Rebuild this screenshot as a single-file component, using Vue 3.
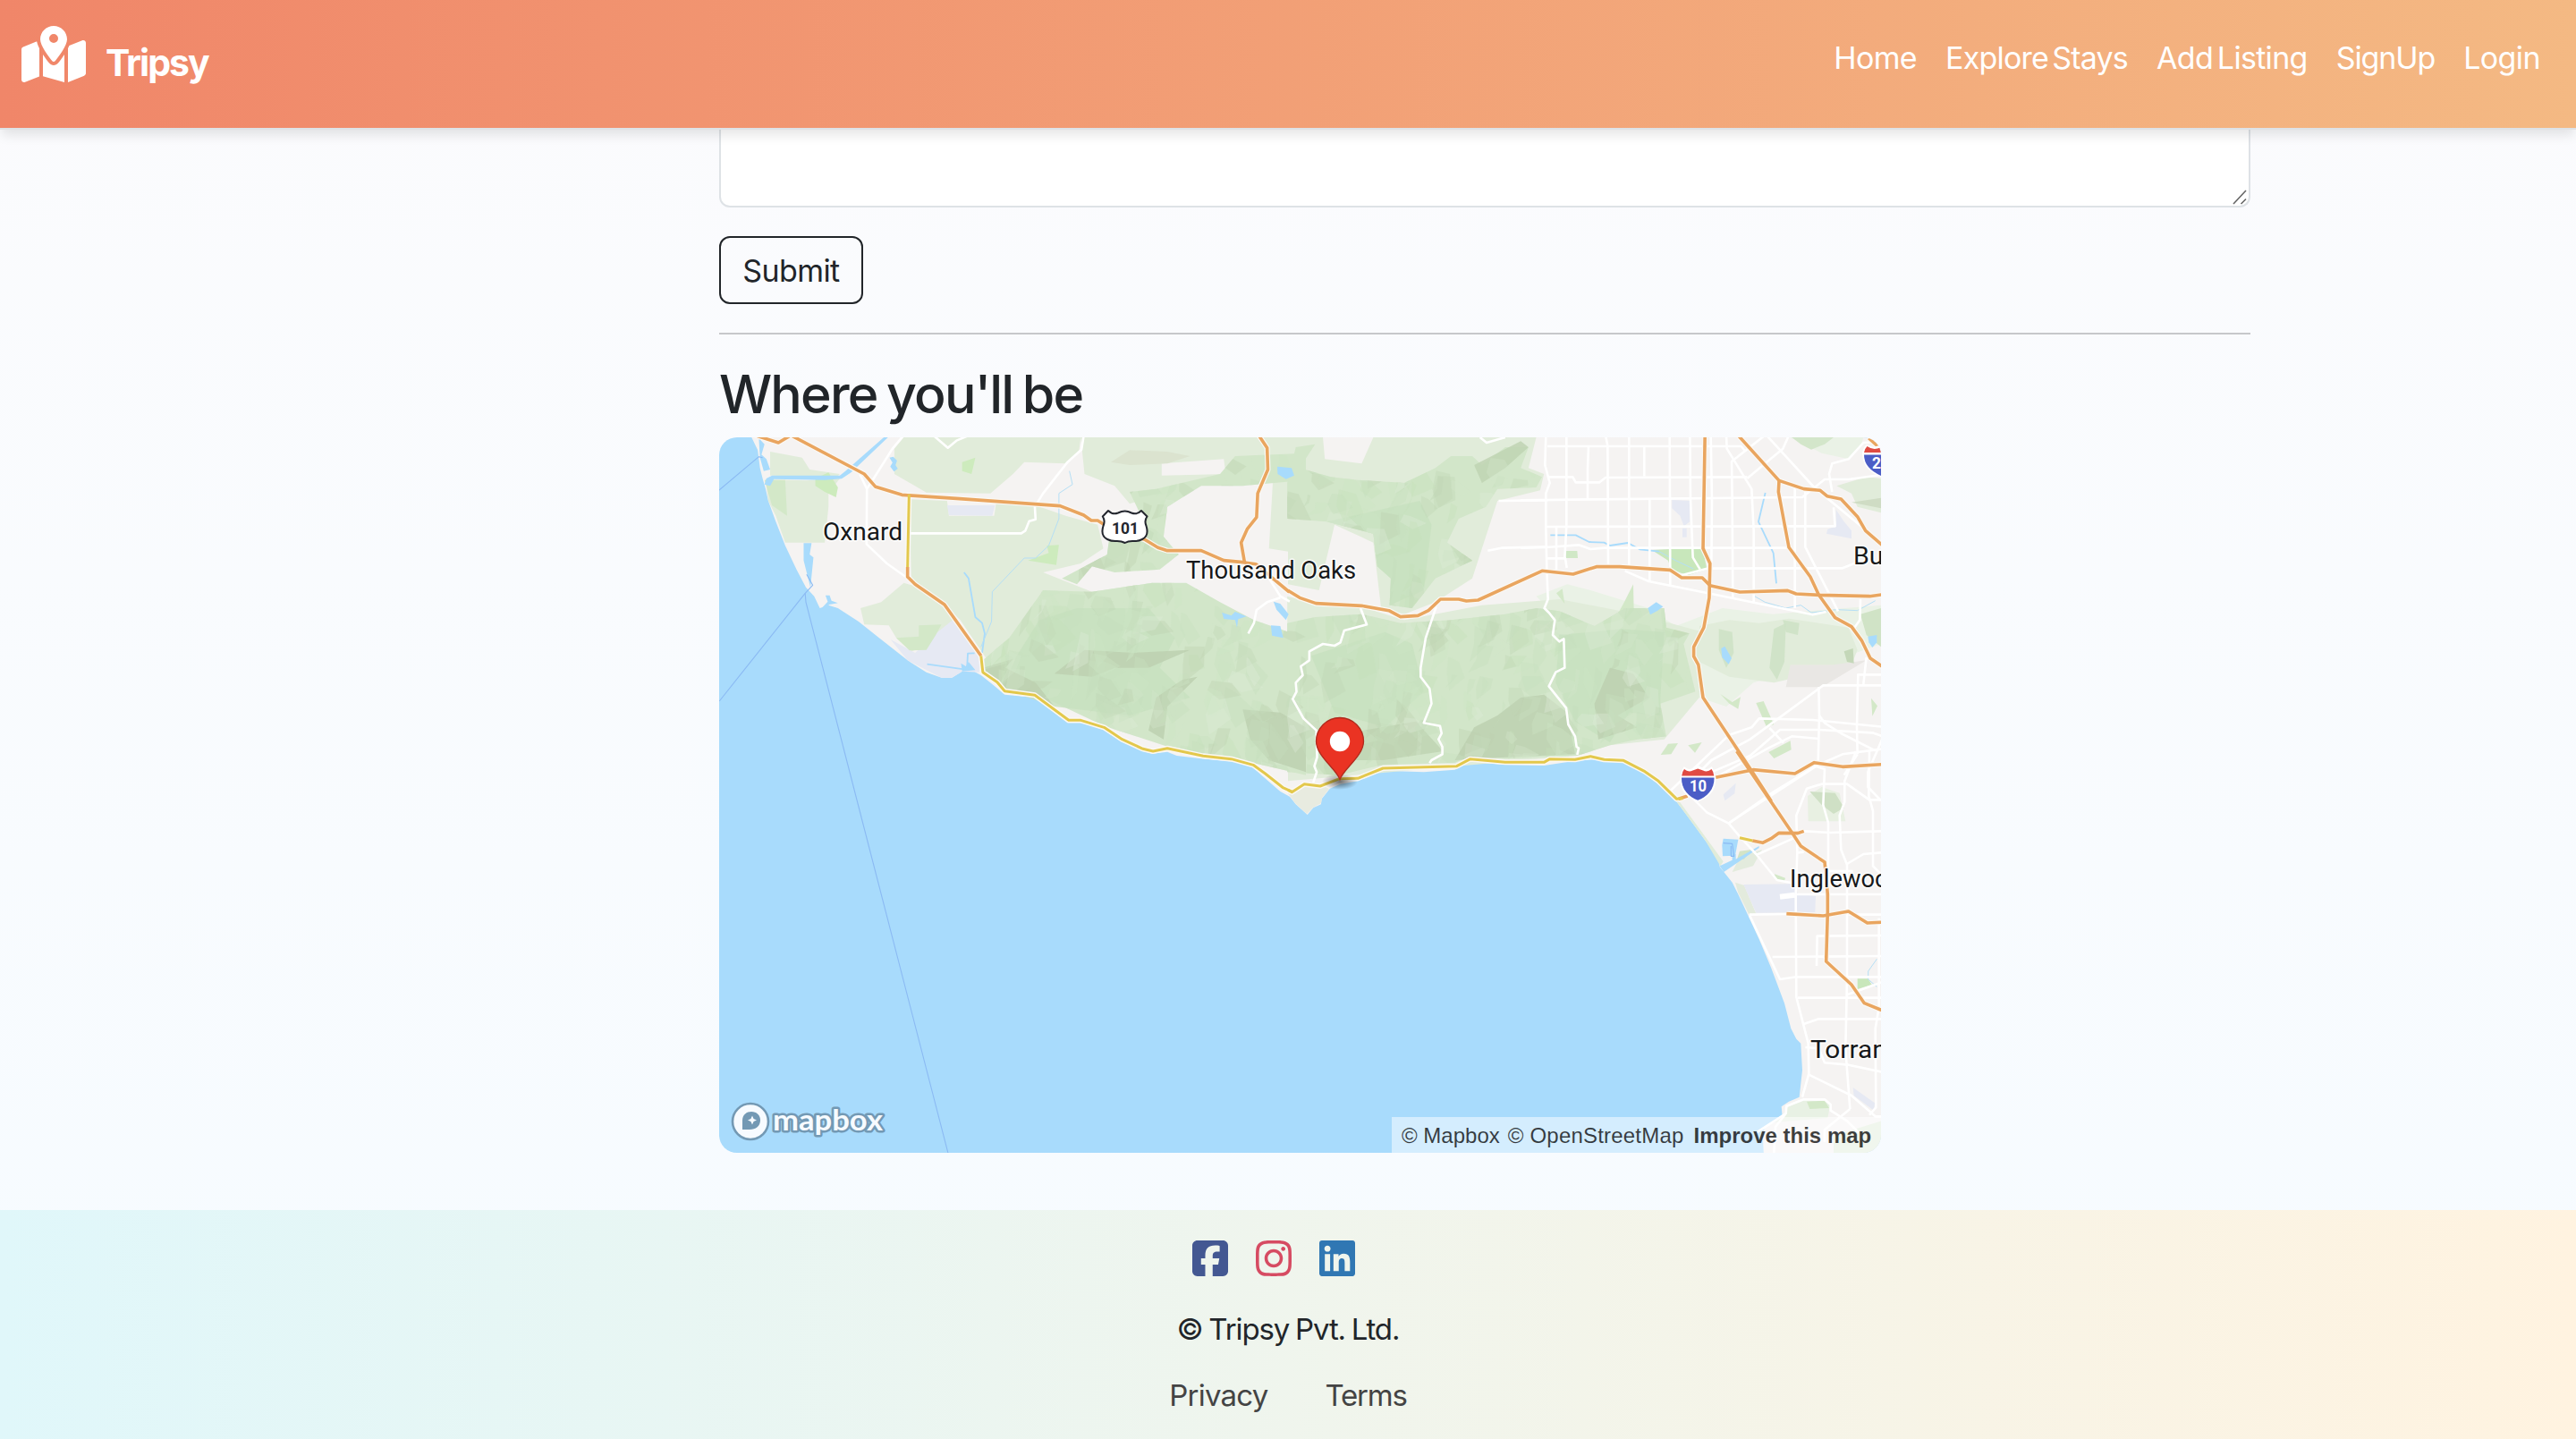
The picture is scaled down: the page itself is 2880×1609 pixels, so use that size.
<script setup>
const navLinks = [
  { label: 'Home', cls: 'home' },
  { label: 'Explore Stays', cls: 'explore' },
  { label: 'Add Listing', cls: 'add' },
  { label: 'SignUp', cls: 'signup' },
  { label: 'Login', cls: 'login' },
]

const socials = [
  {
    name: 'facebook',
    d: 'M64 32C28.7 32 0 60.7 0 96V416c0 35.3 28.7 64 64 64h98.2V334.2H109.4V256h52.8V222.3c0-87.1 39.4-127.5 125-127.5c16.2 0 44.2 3.2 55.7 6.4V172c-6-.6-16.5-1-29.6-1c-42 0-58.2 15.9-58.2 57.2V256h83.6l-14.4 78.2H255V480H384c35.3 0 64-28.7 64-64V96c0-35.3-28.7-64-64-64H64z',
  },
  {
    name: 'instagram',
    d: 'M224.1 141c-63.6 0-114.9 51.3-114.9 114.9s51.3 114.9 114.9 114.9S339 319.5 339 255.9 287.7 141 224.1 141zm0 189.6c-41.1 0-74.7-33.5-74.7-74.7s33.5-74.7 74.7-74.7 74.7 33.5 74.7 74.7-33.6 74.7-74.7 74.7zm146.4-194.3c0 14.9-12 26.8-26.8 26.8-14.9 0-26.8-12-26.8-26.8s12-26.8 26.8-26.8 26.8 12 26.8 26.8zm76.1 27.2c-1.7-35.9-9.9-67.7-36.2-93.9-26.2-26.2-58-34.4-93.9-36.2-37-2.1-147.9-2.1-184.9 0-35.8 1.7-67.6 9.9-93.9 36.1s-34.4 58-36.2 93.9c-2.1 37-2.1 147.9 0 184.9 1.7 35.9 9.9 67.7 36.2 93.9s58 34.4 93.9 36.2c37 2.1 147.9 2.1 184.9 0 35.9-1.7 67.7-9.9 93.9-36.2 26.2-26.2 34.4-58 36.2-93.9 2.1-37 2.1-147.8 0-184.8zM398.8 388c-7.8 19.6-22.9 34.7-42.6 42.6-29.5 11.7-99.5 9-132.1 9s-102.7 2.6-132.1-9c-19.6-7.8-34.7-22.9-42.6-42.6-11.7-29.5-9-99.5-9-132.1s-2.6-102.7 9-132.1c7.8-19.6 22.9-34.7 42.6-42.6 29.5-11.7 99.5-9 132.1-9s102.7-2.6 132.1 9c19.6 7.8 34.7 22.9 42.6 42.6 11.7 29.5 9 99.5 9 132.1s2.7 102.7-9 132.1z',
  },
  {
    name: 'linkedin',
    d: 'M416 32H31.9C14.3 32 0 46.5 0 64.3v383.4C0 465.5 14.3 480 31.9 480H416c17.6 0 32-14.5 32-32.3V64.3c0-17.8-14.4-32.3-32-32.3zM135.4 416H69V202.2h66.5V416zm-33.2-243c-21.3 0-38.5-17.3-38.5-38.5S80.9 96 102.2 96c21.2 0 38.5 17.3 38.5 38.5 0 21.3-17.2 38.5-38.5 38.5zm282.1 243h-66.4V312c0-24.8-.5-56.7-34.5-56.7-34.6 0-39.9 27-39.9 54.9V416h-66.4V202.2h63.7v29.2h.9c8.9-16.8 30.6-34.5 62.9-34.5 67.2 0 79.7 44.3 79.7 101.9V416z',
  },
]

// Map tiles: each has its own local grid placed onto the map canvas.
const WEST = 'translate(800 480) scale(.42092 .33333)'
const MID = 'translate(1440 480) scale(.43367 .33333)'
const EAST = 'translate(1700 480) scale(.33333)'
const SOUTH = 'translate(1750 840) scale(.33333)'

const land = [
  [WEST, '93,20 112,70 118,130 125,165 133,200 140,240 160,310 185,390 215,470 240,530 262,560 277,600 300,590 325,600 380,645 430,695 470,735 510,775 560,815 600,833 628,833 655,812 680,808 705,825 740,860 768,890 848,900 935,985 975,985 1030,1008 1075,1045 1130,1078 1160,1088 1200,1082 1225,1095 1290,1105 1380,1115 1425,1132 1450,1160 1500,1215 1525,1232 1525,20'],
  [MID, '-2,20 -2,1222 20,1258 50,1293 65,1270 85,1258 87,1240 108,1205 135,1190 180,1180 245,1145 350,1150 430,1142 470,1115 560,1125 660,1128 740,1112 790,1108 865,1118 920,1155 955,1190 1000,1245 1045,1320 1600,1320 1600,20'],
  [SOUTH, '370,165 400,205 430,245 470,300 515,360 518,388 532,405 560,440 580,480 612,548 650,630 690,725 735,845 757,930 775,965 790,980 795,1070 785,1160 750,1175 725,1192 728,1225 700,1245 668,1260 663,1300 668,1400 1100,1400 1100,165'],
]

const areas = [
  [WEST, '#e1ecda', '133,168 240,172 330,165 300,215 300,260 290,380 185,380 160,290 140,240'],
  [WEST, '#e1ecda', '145,75 230,95 250,135 330,150 320,162 145,155'],
  [WEST, '#e1ecda', '475,65 500,27 970,27 965,75 930,115 820,110 790,150 730,215 560,212 475,150'],
  [WEST, '#e1ecda', '515,235 615,240 620,290 740,290 745,250 850,255 930,290 1015,320 1030,400 970,450 870,480 1000,545 1160,515 1250,560 1060,640 870,700 720,770 650,640 600,580 520,505'],
  [WEST, '#e1ecda', '970,27 1568,27 1568,420 1470,400 1480,180 1340,180 1230,200 1100,250 1060,190 980,150'],
  [WEST, '#e1ecda', '385,600 440,580 500,515 540,530 605,590 640,640 590,720 520,745 480,700 460,658 395,655'],
  [WEST, '#f5f3f2', '1185,115 1350,100 1355,150 1185,155'],
  [WEST, '#dbe3cf', '1050,110 1100,70 1200,75 1260,90 1200,115 1100,120'],
  [WEST, '#e6e9f3', '615,255 742,255 735,290 620,288'],
  [WEST, '#e6e9f3', '465,705 530,750 590,680 630,640 705,760 700,815 655,812 628,833 600,833 510,775'],
  [WEST, '#d3e8c8', '480,700 540,695 540,658 600,655 585,690 560,740 515,742'],
  [WEST, '#cdebbd', '830,440 885,415 880,390 912,388 905,455'],
  [WEST, '#d3e8c8', '130,170 185,170 190,290 150,255'],
  [WEST, '#cdebbd', '265,165 300,145 325,195 320,228 290,210 265,190'],
  [WEST, '#cdebbd', '655,110 690,95 680,150 655,140'],
  [MID, '#e1ecda', '0,27 90,27 95,100 190,115 220,27 640,27 620,130 660,150 650,205 540,240 510,360 475,500 380,580 300,620 240,600 220,380 120,320 80,540 0,520'],
  [MID, '#eaf2e6', '640,560 720,520 780,540 930,600 1000,660 1120,600 1250,620 1529,590 1529,720 1400,780 1200,850 1130,930 1060,900 960,1030 900,900'],
  [MID, '#e1ecda', '-2,560 90,590 200,600 300,640 500,590 700,570 900,620 1070,680 1060,900 970,1040 830,1060 740,1095 0,1180'],
  [EAST, '#e1ecda', '600,660 700,640 800,650 900,635 1100,665 1130,740 1110,790 850,850 700,830 600,780'],
  [EAST, '#e9e7e4', '905,790 1050,790 1160,775 1010,865 890,865'],
  [EAST, '#c8e7bb', '440,405 500,402 612,402 625,470 560,490 505,470 495,440'],
  [EAST, '#d0e8c6', '150,408 190,408 192,432 152,432'],
  [EAST, '#e6e9f3', '508,237 567,240 568,310 548,325 535,290 508,265'],
  [EAST, '#e6e9f3', '543,332 557,332 557,362 543,362'],
  [EAST, '#e6e9f3', '1058,270 1085,310 1110,340 1110,367 1026,350 1030,335 1058,325'],
  [EAST, '#e6e9f3', '680,1225 722,1187 718,1222 685,1246'],
  [EAST, '#eaf2e6', '905,27 1150,27 1140,60 1100,100 1010,80'],
  [EAST, '#d3e6ca', '910,27 1050,27 1020,50 975,68 940,50'],
  [EAST, '#e1ecda', '1060,190 1160,160 1209,165 1209,280 1130,260 1110,215'],
  [EAST, '#cfdcc4', '1110,245 1209,230 1209,265'],
  [EAST, '#d3e8c8', '790,918 815,912 850,990 825,998'],
  [EAST, '#d3e8c8', '470,1092 495,1055 528,1053 505,1090'],
  [EAST, '#d3e8c8', '562,1060 608,1050 585,1085'],
  [EAST, '#d3e8c8', '832,1083 905,1045 908,1075 850,1104'],
  [EAST, '#d3e8c8', '670,888 710,915 738,898 730,938 700,920'],
  [EAST, '#d3e8c8', '1176,902 1197,928 1180,962'],
  [EAST, '#d3e8c8', '120,550 140,535 148,585'],
  [EAST, '#d3e8c8', '345,585 378,520 380,610 330,612'],
  [SOUTH, '#e8f0e2', '813,150 860,120 920,140 940,235 815,235'],
  [SOUTH, '#cfe0c5', '820,135 905,140 935,190 900,210 860,180'],
  [SOUTH, '#e0ecda', '370,165 385,172 450,260 530,370 520,385 470,300 400,205'],
  [SOUTH, '#e3ebdd', '600,350 660,330 630,385 560,405 575,375'],
  [SOUTH, '#d3e4c6', '585,335 625,330 600,362 575,365'],
  [SOUTH, '#e3ebdd', '570,440 600,450 640,545 615,545 580,475'],
  [SOUTH, '#e6e9f3', '598,447 770,445 780,480 840,485 838,540 640,542'],
  [SOUTH, '#d3e8c8', '702,412 738,425 735,435 705,432'],
  [SOUTH, '#c8e7bb', '980,763 1015,763 1028,783 980,798'],
  [SOUTH, '#e6e9f3', '965,1128 1038,1180 1035,1205 968,1155'],
  [SOUTH, '#e8f1e4', '745,1195 800,1168 890,1180 880,1230 700,1245 730,1225'],
  [SOUTH, '#d3e8c8', '810,1175 870,1172 885,1197 820,1200'],
  [SOUTH, '#e0ecda', '900,1290 1060,1240 1060,1350 900,1350'],
]

const hills = [
  [WEST, '705,780 780,700 870,540 1000,545 1160,515 1250,515 1340,580 1430,640 1568,700 1568,1160 1430,1120 1295,1090 1200,1064 1032,995 848,885 768,870 715,815'],
  [WEST, '1100,210 1170,200 1340,150 1380,90 1568,80 1568,170 1400,190 1290,190 1200,260 1190,360 1230,420 1180,470 1060,480 1000,460 960,520 920,500 1040,420 1050,320 1130,290'],
  [MID, '-2,650 70,630 190,620 290,650 420,640 560,620 640,600 700,610 790,660 870,600 970,600 975,665 1035,685 1020,720 1035,800 1050,880 960,920 975,1030 900,1040 830,1060 745,1095 560,1105 470,1095 430,1118 245,1125 130,1160 -2,1150'],
  [MID, '20,60 70,50 30,130 110,160 180,170 300,180 380,130 420,90 475,90 500,120 560,60 620,60 600,130 655,160 640,195 540,200 510,260 440,300 410,380 475,440 380,500 320,600 262,590 265,500 230,460 220,350 100,310 -2,300 -2,180'],
]

const darker = [
  [WEST, '#c8e1bf', '860,640 960,600 1150,600 1220,700 1180,800 1260,900 1100,960 900,930 760,870 800,760'],
  [WEST, '#bdd0b0', '980,740 1110,750 1260,740 1150,800 1060,800 1000,830 900,820'],
  [WEST, '#bdd0b0', '1400,940 1500,950 1568,1000 1568,1150 1470,1110 1420,1040'],
  [WEST, '#bdd0b0', '1150,1010 1170,900 1240,840 1280,830 1200,930 1190,1040'],
  [WEST, '#bdd0b0', '710,800 790,770 770,800 850,850 900,930 840,885 768,870'],
  [MID, '#c8e1bf', '100,310 340,240 370,320 350,540 262,590 265,500 230,460 220,350'],
  [MID, '#c8e1bf', '700,690 860,670 970,680 960,900 960,960 880,950 830,1050 740,980 690,850'],
  [MID, '#c8e1bf', '60,760 250,680 320,720 350,880 250,1000 120,950'],
  [MID, '#bdd0b0', '540,960 600,900 660,890 720,950 740,1090 560,1100 430,1110 480,1000'],
  [MID, '#c0d3b3', '150,1020 330,980 400,1080 245,1110 150,1110'],
  [MID, '#bdd0b0', '830,800 890,820 930,900 850,960 900,1000 800,1040 790,920'],
  [MID, '#c0d3b3', '480,120 600,40 620,60 560,130 500,180'],
  [EAST, '#cde2c4', '665,670 710,680 715,750 690,800 665,740'],
  [EAST, '#cde2c4', '850,670 890,650 885,780 860,840 835,800'],
  [EAST, '#cde2c4', '880,640 935,650 930,690 890,680'],
  [EAST, '#bed3b2', '1085,745 1115,735 1118,785 1095,780'],
  [EAST, '#cbe0c0', '1140,620 1209,600 1209,730 1160,690'],
]

// Small shaded facets that give the mountains their relief.
function mulberry(seed) {
  let s = seed
  return () => {
    s = (s + 0x6d2b79f5) | 0
    let t = Math.imul(s ^ (s >>> 15), 1 | s)
    t = (t + Math.imul(t ^ (t >>> 7), 61 | t)) ^ t
    return ((t ^ (t >>> 14)) >>> 0) / 4294967296
  }
}
const rnd = mulberry(34)
const tones = ['#c8e1bf', '#c4e0b9', '#bdcfae', '#d3e6ca', '#dfebd8', '#c5dfbc', '#c0d6b4', '#cde5c4']
const facets = Array.from({ length: 700 }, () => {
  const x = 1080 + rnd() * 840
  const y = 500 + rnd() * 370
  const w = 6 + rnd() * 20
  const h = 12 + rnd() * 34
  const lean = (rnd() - 0.5) * 24
  const pts = [
    [x, y],
    [x + w * (0.4 + rnd() * 0.6), y + h * 0.2 * rnd()],
    [x + w + lean, y + h * (0.5 + rnd() * 0.3)],
    [x + lean, y + h],
    [x - w * 0.3 * rnd(), y + h * 0.5],
  ]
  return { p: pts.map((q) => q.map((n) => n.toFixed(1)).join(',')).join(' '), c: tones[Math.floor(rnd() * tones.length)] }
})

const water = [
  [WEST, '455,18 345,140 330,155 150,155 135,165 130,185 145,190 155,167 290,170 335,166 360,145 458,27'],
  [WEST, '462,95 472,92 482,105 478,120 484,132 474,142 464,125 470,112'],
  [WEST, '1492,125 1530,130 1537,155 1515,167 1493,150'],
  [WEST, '1345,615 1370,625 1380,612 1410,628 1388,637 1385,665 1380,640 1350,636'],
  [WEST, '1482,578 1500,585 1522,620 1515,640 1490,605'],
  [WEST, '1475,658 1500,660 1508,700 1478,692'],
  [WEST, '234,382 255,382 250,420 260,430 252,530 240,470 234,440'],
  [WEST, '292,557 303,557 308,575 325,583 302,588 290,602 282,600 298,578'],
  [WEST, '115,30 130,50 122,85 135,100 145,135 128,140 118,95'],
  [WEST, '652,785 665,795 672,780 690,808 655,812'],
  [EAST, '427,600 455,580 478,595 460,608 435,622'],
  [EAST, '673,735 685,728 708,768 698,788 676,765'],
  [EAST, '1165,695 1195,690 1195,715 1180,732 1168,715'],
  [SOUTH, '530,293 580,296 570,350 528,352 526,315'],
  [SOUTH, '518,385 560,365 560,345 572,345 572,362 650,318 650,324 532,405'],
]

const streams = [
  [WEST, '660,480 672,500 690,630 708,650 715,685 708,750'],
  [WEST, '562,788 660,805'],
  [WEST, '688,751 670,752 668,800'],
  [EAST, '100,355 185,355 230,378 280,380 300,390 360,381 400,403 465,410'],
  [EAST, '821,213 798,310 848,415 858,517'],
]
const thinStreams = [
  [WEST, '940,140 948,185 912,215 912,300 885,390 850,432 820,432 735,545 733,645 705,730'],
  [EAST, '465,410 520,440 580,468'],
  [EAST, '785,560 820,580 890,600 940,590 975,615 1060,605 1130,608 1190,575'],
  [SOUTH, '1045,697 1016,738 1016,765 1045,790'],
]
const ferries = [
  [WEST, '0,214 115,92 125,95'],
  [WEST, '10,912 238,550 258,523 242,487'],
  [WEST, '238,550 240,580 391,1320 618,2430'],
  [SOUTH, '530,308 560,310 566,352 556,352 556,318'],
]

const streets = [
  [WEST, '500,20 470,65 420,165 402,200 401,385 455,450 505,495'],
  [WEST, '383,150 402,200'],
  [WEST, '578,20 617,62 640,38 670,22'],
  [WEST, '978,20 972,68 935,110 870,215 848,260 850,302 833,308 823,340 812,349 518,349'],
  [WEST, '1470,500 1500,560 1525,578'],
  [WEST, '1500,565 1465,580 1437,606 1430,650 1415,685'],
  [MID, '187,600 203,655 145,675 135,715 120,726 90,720 55,745 55,775 33,795 38,825 20,850 22,880 12,905 40,970 73,1010 75,1100 68,1130 74,1150 65,1185'],
  [MID, '382,595 355,700 342,800 342,830 365,870 370,920 350,985 392,995 396,1020 388,1040 398,1065 398,1090 370,1110 365,1120'],
  [MID, '515,407 550,398 670,394'],
  [MID, '543,240 670,238'],
  [MID, '495,27 512,45 560,27'],
  [EAST, '85,20 82,120 98,180 85,215 85,330 88,470 92,570 80,600 95,615 115,640 108,690 130,712 145,703 148,800 118,815 95,862 153,935 160,990 183,1030 188,1065 195,1070 190,1092'],
  [EAST, '154,20 154,325'],
  [EAST, '120,330 120,470'],
  [EAST, '85,433 150,433 155,465'],
  [EAST, '154,325 148,433'],
  [EAST, '228,60 225,130 225,235'],
  [EAST, '285,20 292,55 294,460'],
  [EAST, '364,20 364,465'],
  [EAST, '415,60 415,158'],
  [EAST, '433,235 433,510'],
  [EAST, '500,20 502,525'],
  [EAST, '568,20 570,235 578,430 602,470'],
  [EAST, '638,20 642,240 640,465'],
  [EAST, '690,20 692,65 775,200 782,340 782,580'],
  [EAST, '820,20 708,108 710,240 712,565'],
  [EAST, '90,57 740,57 755,75'],
  [EAST, '90,160 175,160 185,178 265,178 285,162 760,160'],
  [EAST, '0,238 250,235 945,228 1020,168 1100,168 1215,152'],
  [EAST, '85,327 1055,325 1050,262'],
  [EAST, '0,398 85,396 195,388 235,402 280,398 905,398'],
  [EAST, '540,490 625,467 1080,466 1125,448'],
  [EAST, '350,475 430,510 640,552 900,605 980,622 1025,612'],
  [EAST, '825,20 985,195 1160,340'],
  [EAST, '1200,42 1150,45 1100,100 1045,115 1035,150 1045,210'],
  [EAST, '760,165 880,65 900,20'],
  [EAST, '920,195 920,600'],
  [EAST, '955,200 955,395 1065,610'],
  [EAST, '1140,570 1138,640 1120,665'],
  [EAST, '1160,765 1150,855'],
  [EAST, '1215,823 1132,823 1128,1000 1130,1090'],
  [EAST, '1215,859 1015,859 770,1040 640,1110 550,1200'],
  [EAST, '1000,865 1002,960 1020,985 1075,1020 1190,1078'],
  [EAST, '1002,960 998,1120'],
  [EAST, '500,1215 700,1025 775,1000 800,970 980,975 1215,998'],
  [EAST, '640,1150 770,1095 870,1008 1000,1008 1180,1018 1215,1030'],
  [EAST, '660,1165 830,1070 910,1030 1000,1038'],
  [EAST, '835,1002 882,1052'],
  [EAST, '700,1320 1000,1125 1080,1090 1215,1072'],
  [EAST, '1215,1035 1165,1150 1165,1200 1209,1245'],
  [EAST, '1130,1090 1085,1160'],
  [SOUTH, '430,160 475,205 548,242 580,280 640,345 710,432 760,442'],
  [SOUTH, '548,242 700,135 840,50 870,60 865,180 882,240 882,480'],
  [SOUTH, '640,348 770,290'],
  [SOUTH, '1062,163 1020,163 945,110 860,110 810,125 775,215 778,340 773,480 775,825 815,980 817,1082 795,1160'],
  [SOUTH, '975,0 937,100 937,170 920,215 925,330 945,380 945,760 940,1000 955,1200'],
  [SOUTH, '1020,0 1018,150 1032,200 1032,385 1062,415'],
  [SOUTH, '800,268 890,273 1062,268'],
  [SOUTH, '945,378 1000,345 1062,340'],
  [SOUTH, '780,340 800,338'],
  [SOUTH, '885,402 965,402'],
  [SOUTH, '765,480 1062,480'],
  [SOUTH, '618,548 745,546'],
  [SOUTH, '950,548 1062,548'],
  [SOUTH, '618,550 720,765 775,757 1062,757'],
  [SOUTH, '843,720 845,620 1062,618'],
  [SOUTH, '695,690 1062,687'],
  [SOUTH, '780,827 1062,827'],
  [SOUTH, '800,915 850,898 1062,898'],
  [SOUTH, '945,817 1062,775'],
  [SOUTH, '1052,560 1052,860 1040,930 1042,1195 1020,1220'],
  [SOUTH, '805,993 850,997 870,1045 950,1052 1062,1076'],
  [SOUTH, '817,1085 960,1155 1040,1225 1062,1225'],
  [SOUTH, '640,1280 740,1215 742,1190 800,1168 870,1168 890,1185 890,1205 945,1240 985,1280'],
  [SOUTH, '740,1215 705,1260 700,1350'],
  [SOUTH, '955,1200 870,1270 870,1310'],
]
const wideStreets = [
  [SOUTH, '720,488 770,482'],
]

const motorways = [
  [WEST, '105,20 167,45 200,20'],
  [WEST, '200,20 395,150 425,193 495,220 640,232 915,257 978,288 998,306 1015,306 1045,330 1140,370 1175,397 1200,407 1290,407 1350,440 1400,446 1435,452 1480,500 1524,546'],
  [WEST, '1440,15 1465,62 1467,135 1440,215 1437,295 1412,335 1396,380 1405,446'],
  [WEST, '510,462 510,495 530,520 608,588 705,760'],
  [MID, '0,541 30,565 72,584 190,592 260,608 290,629 335,625 362,608 393,570 440,570 460,576 490,573 655,475 735,486 795,461 855,461 985,472 1015,498 1068,498 1088,524 1165,546 1288,541 1310,552 1370,556 1500,560 1535,554'],
  [MID, '1075,15 1070,400 1088,450 1086,565 1072,665 1046,730 1046,762 1058,790 1070,900 1195,1145 1246,1248'],
  [SOUTH, '575,0 762,275 790,318 870,372 880,480 880,540 875,705 960,783 1003,845 1070,872'],
  [EAST, '725,15 867,172 950,200 1005,205 1028,224 1075,234 1130,293 1157,340 1215,390'],
  [EAST, '867,172 865,210 900,396 972,495 1000,555 1055,632 1110,662 1145,710 1173,768 1215,797'],
  [EAST, '655,1168 780,1142 920,1155 985,1118 1080,1132 1215,1124'],
  [EAST, '530,1240 560,1230'],
  [EAST, '1168,30 1200,58'],
  [SOUTH, '628,300 662,307 690,293 717,274 780,275 800,268'],
  [SOUTH, '742,545 865,552 950,537 1013,576 1070,573'],
]
const coastRoads = [
  [WEST, '514,218 510,462'],
  [WEST, '705,760 710,815 748,848 768,878 848,892 938,976 970,976 1032,1000 1080,1040 1135,1072 1162,1080 1200,1070 1295,1096 1370,1106 1428,1126 1460,1155 1508,1203 1532,1216'],
  [MID, '0,1210 10,1217 42,1190 83,1197 133,1172 180,1171 245,1137 435,1130 470,1106 560,1117 660,1117 675,1106 740,1108 780,1097 815,1108 865,1111 920,1148 955,1180 1002,1240 1018,1238'],
  [SOUTH, '585,290 628,300'],
]
</script>

<template>
  <div class="page">
    <header class="navbar">
      <a class="brand">
        <svg class="brand-icon" viewBox="0 0 576 512">
          <path
            d="M408 120c0 54.6-73.1 151.9-105.2 192c-7.7 9.6-22 9.6-29.6 0C241.1 271.9 168 174.6 168 120C168 53.7 221.7 0 288 0s120 53.7 120 120zm8 80.4c3.5-6.9 6.7-13.8 9.6-20.6c.5-1.2 1-2.5 1.5-3.7l116-46.4C558.9 123.4 576 135 576 152V422.8c0 9.8-6 18.6-15.1 22.3L416 503V200.4zM137.6 138.3c2.4 14.1 7.2 28.3 12.8 41.5c2.9 6.8 6.1 13.7 9.6 20.6V451.8L32.9 502.7C17.1 509 0 497.4 0 480.4V209.6c0-9.8 6-18.6 15.1-22.3l122.6-49zM327.8 332c13.9-17.4 35.7-45.7 56.2-77V504.3L192 449.4V255c20.5 31.3 42.3 59.6 56.2 77c20.5 25.6 59.1 25.6 79.6 0zM288 152a40 40 0 1 0 0-80 40 40 0 1 0 0 80z"
          />
        </svg>
        <span class="brand-name">Tripsy</span>
      </a>
      <nav class="links">
        <a v-for="link in navLinks" :key="link.label" :class="link.cls">{{ link.label }}</a>
      </nav>
    </header>

    <main class="content">
      <div class="comment-box">
        <svg class="grip" viewBox="0 0 18 18">
          <path d="M2 17 16 2M10.500 17 16 11.500" />
        </svg>
      </div>
      <button class="submit" type="button">Submit</button>
      <hr />
      <h3>Where you'll be</h3>

      <div class="map">
        <svg class="map-canvas" viewBox="804 489 1299 800">
          <defs>
            <clipPath id="hill-clip">
              <polygon v-for="(h, i) in hills" :key="i" :transform="h[0]" :points="h[1]" />
            </clipPath>
            <radialGradient id="pin-shadow">
              <stop offset="0" stop-opacity=".55" />
              <stop offset="1" stop-opacity="0" />
            </radialGradient>
          </defs>

          <rect class="sea" x="804" y="489" width="1300" height="800" />
          <polygon v-for="(l, i) in land" :key="'l' + i" class="land" :transform="l[0]" :points="l[1]" />
          <polygon v-for="(a, i) in areas" :key="'a' + i" :transform="a[0]" :fill="a[1]" :points="a[2]" />
          <polygon v-for="(h, i) in hills" :key="'h' + i" class="hill" :transform="h[0]" :points="h[1]" />
          <polygon v-for="(d, i) in darker" :key="'d' + i" :transform="d[0]" :fill="d[1]" :points="d[2]" opacity=".85" />
          <g clip-path="url(#hill-clip)">
            <polygon v-for="(f, i) in facets" :key="'f' + i" class="facet" :points="f.p" :fill="f.c" />
          </g>
          <polygon class="beach" points="1440,887 1448,898 1461,910 1468,903 1477,898 1478,892 1486,882 1478,878 1458,877" />

          <polygon v-for="(w, i) in water" :key="'w' + i" class="sea" :transform="w[0]" :points="w[1]" />
          <polyline v-for="(s, i) in streams" :key="'s' + i" class="line stream" :transform="s[0]" :points="s[1]" />
          <polyline v-for="(s, i) in thinStreams" :key="'t' + i" class="line thin" :transform="s[0]" :points="s[1]" />
          <polyline v-for="(s, i) in ferries" :key="'e' + i" class="line ferry" :transform="s[0]" :points="s[1]" />
          <polyline v-for="(s, i) in streets" :key="'r' + i" class="line street" :transform="s[0]" :points="s[1]" />
          <polyline v-for="(s, i) in wideStreets" :key="'v' + i" class="line runway" :transform="s[0]" :points="s[1]" />
          <polyline v-for="(s, i) in [...motorways, ...coastRoads]" :key="'c' + i" class="line casing" :transform="s[0]" :points="s[1]" />
          <polyline v-for="(s, i) in motorways" :key="'m' + i" class="line motorway" :transform="s[0]" :points="s[1]" />
          <polyline v-for="(s, i) in coastRoads" :key="'y' + i" class="line coast" :transform="s[0]" :points="s[1]" />

          <g class="us-shield">
            <path d="M1239 571Q1244 576 1250 573.500Q1254 571.500 1257.700 571.500Q1261 571.500 1265 573.500Q1271 576 1276 571L1282.500 577.500Q1279 582 1281.500 588Q1285 599 1277 603Q1272 605.500 1266 605Q1261 605 1257.700 607Q1254 605 1249 605Q1243 605.500 1238 603Q1230 599 1233.500 588Q1236 582 1232.800 577.500Z" />
            <text x="1243" y="596.500" textLength="30" lengthAdjust="spacingAndGlyphs">101</text>
          </g>

          <g class="interstate">
            <path class="outline" d="M1883 858.500Q1888 862.500 1892.500 860Q1898 857 1898.200 857Q1898.500 857 1904 860Q1908.500 862.500 1913.500 858.500Q1917 864 1917 873C1917 885 1907 892 1898.200 895.500C1889.500 892 1879.500 885 1879.500 873Q1879.500 864 1883 858.500Z" />
            <path class="red" d="M1883 860Q1887.500 864 1892.500 861.500L1898.200 859.500L1904 861.500Q1909 864 1913.500 860Q1916 863 1916.300 867.500H1880.200Q1880.500 863 1883 860Z" />
            <path class="blue" d="M1880 869.500H1916.500C1917 883 1908 891 1898.200 894.800C1888.500 891 1879.500 883 1880 869.500Z" />
            <text x="1889" y="884.500" textLength="19" lengthAdjust="spacingAndGlyphs">10</text>
          </g>

          <g class="interstate">
            <path class="outline" d="M2087 498Q2093 502 2098 500L2107 497.500V533.500Q2083 526 2083 507Q2083 503 2087 498Z" />
            <path class="red" d="M2087.500 499Q2093 503 2099 501.500L2107 499V506H2084Q2084.500 502 2087.500 499Z" />
            <path class="blue" d="M2084 508.500H2107V533.500Q2084 525 2084 508.500Z" />
            <text x="2093" y="524" textLength="10" lengthAdjust="spacingAndGlyphs">2</text>
          </g>

          <g class="place">
            <text x="920" y="604" textLength="89" lengthAdjust="spacingAndGlyphs">Oxnard</text>
            <text x="1326" y="647" textLength="190" lengthAdjust="spacingAndGlyphs">Thousand Oaks</text>
            <text x="2072" y="630.500" textLength="105" lengthAdjust="spacingAndGlyphs">Burbank</text>
            <text x="2001" y="992" textLength="126" lengthAdjust="spacingAndGlyphs">Inglewood</text>
            <text x="2024" y="1182.500" textLength="117" lengthAdjust="spacingAndGlyphs">Torrance</text>
          </g>

          <ellipse cx="1498" cy="874" rx="20" ry="9" fill="url(#pin-shadow)" />
          <path class="pin" d="M1498 871.500C1494 860 1471.500 845 1471.500 829A26.500 26.500 0 0 1 1524.500 829C1524.500 845 1502 860 1498 871.500Z" />
          <circle cx="1498" cy="829" r="11.200" fill="#fff" />

          <g class="logo">
            <circle cx="839" cy="1254" r="20" />
            <path class="mark" d="M830 1263V1253C830 1246 835 1243 840 1243C846 1243 850 1247 850 1252.500C850 1259 845 1263 838 1263Z" />
            <path class="spark" d="M841 1247.500L842.600 1250.900L846 1252.500L842.600 1254.100L841 1257.500L839.400 1254.100L836 1252.500L839.400 1250.900Z" />
            <text x="864" y="1263.500" textLength="123" lengthAdjust="spacingAndGlyphs">mapbox</text>
          </g>
        </svg>
        <div class="attribution">
          <a>© Mapbox</a>
          <a class="osm">© OpenStreetMap</a>
          <a class="improve">Improve this map</a>
        </div>
      </div>
    </main>

    <footer class="footer">
      <div class="socials">
        <svg v-for="s in socials" :key="s.name" :class="s.name" viewBox="0 32 448 448">
          <path :d="s.d" />
        </svg>
      </div>
      <div class="copyright">© Tripsy Pvt. Ltd.</div>
      <div class="legal">
        <a class="privacy">Privacy</a>
        <a class="terms">Terms</a>
      </div>
    </footer>
  </div>
</template>

<style>
body {
  margin: 0;
}
</style>

<style scoped>
.page {
  width: 2880px;
  height: 1609px;
  overflow: hidden;
  display: flex;
  flex-direction: column;
  background: linear-gradient(#fbfbfd, #f6fbff);
  color: #212529;
  font-family: Inter, 'Open Sans', sans-serif;
  font-size: 34px;
}
.navbar {
  position: relative;
  z-index: 2;
  box-sizing: border-box;
  height: 145px;
  flex: none;
  display: flex;
  justify-content: space-between;
  align-items: flex-start;
  padding: 0 40px 0 24px;
  color: #fff;
  background: linear-gradient(90deg, #f08669, #f4b983) padding-box;
  border-bottom: 2px solid #dee2e6;
  box-shadow: 0 8px 12px -2px rgba(0, 0, 0, 0.1);
}
.brand {
  display: flex;
  align-items: flex-start;
}
.brand-icon {
  width: 72px;
  height: 64px;
  margin-top: 29px;
  fill: #fff;
}
.brand-name {
  margin: 40px 0 0 22px;
  font-size: 41px;
  line-height: 60px;
  font-weight: 700;
  letter-spacing: -2px;
}
.links {
  display: flex;
  gap: 32px;
  margin-top: 38px;
  line-height: 54px;
  letter-spacing: -0.6px;
}
.explore {
  letter-spacing: -0.8px;
  word-spacing: -4.5px;
}
.add {
  letter-spacing: -0.7px;
  word-spacing: -4px;
}
.signup {
  letter-spacing: -1.1px;
}
.content {
  width: 1712px;
  margin-left: 804px;
  flex: none;
  display: flex;
  flex-direction: column;
  align-items: flex-start;
}
.comment-box {
  box-sizing: border-box;
  width: 1712px;
  height: 87px;
  display: flex;
  justify-content: flex-end;
  align-items: flex-end;
  padding: 0 1px 1px 0;
  background: #fff;
  border: 2px solid #dee2e6;
  border-top: 0;
  border-radius: 0 0 12px 12px;
}
.grip {
  width: 18px;
  height: 18px;
  fill: none;
  stroke: #666;
  stroke-width: 1.6;
}
.submit {
  box-sizing: border-box;
  width: 161px;
  height: 76px;
  margin-top: 32px;
  padding: 0;
  border: 2px solid #212529;
  border-radius: 12px;
  background: transparent;
  color: #212529;
  font: inherit;
  letter-spacing: -0.6px;
}
hr {
  width: 100%;
  height: 2px;
  margin: 32px 0 0;
  border: 0;
  background: #c6c7ca;
}
h3 {
  margin: 31px 0 12px;
  font-size: 59px;
  line-height: 72px;
  font-weight: 500;
  letter-spacing: -1.8px;
  word-spacing: -3.5px;
}
.map {
  position: relative;
  width: 1299px;
  height: 800px;
  border-radius: 20px;
  overflow: hidden;
}
.map-canvas {
  display: block;
  width: 1299px;
  height: 800px;
}
.sea {
  fill: #a8dbfc;
}
.land {
  fill: #f5f3f2;
}
.hill {
  fill: #d2e6c9;
}
.beach {
  fill: #e8ebe0;
}
.facet {
  opacity: 0.36;
}
.line {
  fill: none;
  stroke-linejoin: round;
  vector-effect: non-scaling-stroke;
}
.stream {
  stroke: #a8dbfc;
  stroke-width: 1.8;
}
.thin {
  stroke: #b5dff5;
  stroke-width: 1;
}
.ferry {
  stroke: #8bbaf3;
  stroke-width: 1.1;
}
.street {
  stroke: #fff;
  stroke-width: 2.6;
}
.runway {
  stroke: #fff;
  stroke-width: 6;
}
.casing {
  stroke: #fbf8f3;
  stroke-width: 6;
}
.motorway {
  stroke: #e9a55f;
  stroke-width: 3.6;
}
.coast {
  stroke: #e3c84c;
  stroke-width: 3;
}
.place {
  font-family: Roboto, sans-serif;
  font-size: 27px;
  fill: #16181a;
  stroke: #fff;
  stroke-width: 3px;
  stroke-opacity: 0.85;
  stroke-linejoin: round;
  paint-order: stroke;
}
.us-shield path {
  fill: #fff;
  stroke: #23262e;
  stroke-width: 2;
  stroke-linejoin: round;
}
.us-shield text,
.interstate text {
  font-family: Roboto, sans-serif;
  font-weight: 700;
  font-size: 18px;
  fill: #23262e;
}
.interstate text {
  fill: #fff;
}
.outline {
  fill: #fff;
  stroke: #fff;
  stroke-width: 2;
}
.red {
  fill: #df4b43;
}
.blue {
  fill: #4b5dc6;
}
.pin {
  fill: #ea3323;
  stroke: #b02a1d;
  stroke-width: 1.3;
}
.logo circle {
  fill: #f7fbff;
  stroke: #7399b4;
  stroke-width: 2.6;
}
.mark {
  fill: #7399b4;
}
.spark {
  fill: #f7fbff;
}
.logo text {
  font-family: Lato, sans-serif;
  font-weight: 700;
  font-size: 33px;
  fill: #f7fbff;
  stroke: #7399b4;
  stroke-width: 5px;
  stroke-linejoin: round;
  paint-order: stroke;
}
.attribution {
  position: absolute;
  right: 0;
  bottom: 0;
  box-sizing: border-box;
  width: 547px;
  height: 40px;
  display: flex;
  padding-left: 11px;
  background: rgba(255, 255, 255, 0.5);
  color: rgba(0, 0, 0, 0.75);
  font-family: 'Liberation Sans', Arial, sans-serif;
  font-size: 24px;
  line-height: 41px;
  white-space: nowrap;
}
.osm {
  margin-left: 9px;
  letter-spacing: 0.2px;
}
.improve {
  margin-left: 11px;
  font-weight: 700;
}
.footer {
  box-sizing: border-box;
  height: 256px;
  margin-top: 64px;
  padding-top: 34px;
  flex: none;
  display: flex;
  flex-direction: column;
  align-items: center;
  background: linear-gradient(90deg, #e0f7fa, #fff3e0);
  font-size: 33px;
  line-height: 48px;
}
.socials {
  display: flex;
  gap: 31px;
  padding-right: 32px;
}
.socials svg {
  width: 40px;
  height: 40px;
}
.facebook {
  fill: #435892;
}
.instagram {
  fill: #d64b62;
}
.linkedin {
  fill: #3077b3;
}
.copyright {
  margin-top: 35px;
  letter-spacing: -1.1px;
  word-spacing: -1.5px;
}
.legal {
  display: flex;
  gap: 64px;
  margin-top: 26px;
  color: #444;
}
.privacy {
  letter-spacing: -0.8px;
}
.terms {
  letter-spacing: -1.2px;
}
</style>
